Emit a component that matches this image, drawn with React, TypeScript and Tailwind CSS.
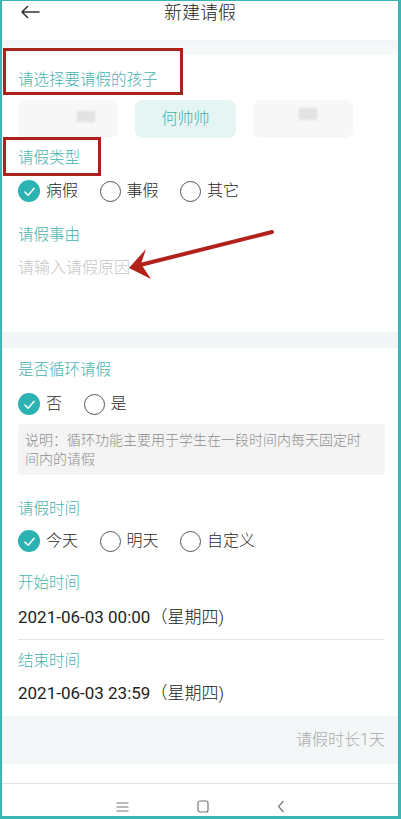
import React from "react";

const Check = ({ on }: { on: boolean }) =>
  on ? (
    <span className="flex h-[22px] w-[22px] items-center justify-center rounded-full bg-[#2bb2b2]">
      <svg width="13" height="13" viewBox="0 0 14 14" fill="none">
        <path d="M2 7.5 L5.6 11 L12 3.5" stroke="#fff" strokeWidth="1.6" strokeLinecap="round" strokeLinejoin="round" />
      </svg>
    </span>
  ) : (
    <span className="h-[21px] w-[21px] rounded-full border border-[#555]" />
  );

const Radio = ({ items, checked }: { items: string[]; checked: number }) => (
  <div className="flex items-center gap-[21.5px]">
    {items.map((t, i) => (
      <div key={t} className="flex items-center gap-[6px]">
        <Check on={i === checked} />
        <span className="text-[16px] leading-[20px] text-[#2a2a2a]">{t}</span>
      </div>
    ))}
  </div>
);

const Label = ({ children }: { children: React.ReactNode }) => (
  <span className="text-[15.5px] leading-[20px] text-[#45b3b0]">{children}</span>
);

const DateText = ({ time }: { time: string }) => (
  <span className="text-[17px] text-[#222]">
    <span className="font-normal">{time}</span>
    <span className="font-light">（星期四)</span>
  </span>
);

export default function App() {
  return (
    <div className="relative box-border flex h-[819px] w-[401px] flex-col overflow-hidden border-t border-l-2 border-r-[3px] border-b-[3px] border-[#3cb5b5] bg-white font-['Roboto','Noto_Sans_CJK_SC',sans-serif] font-light">
      {/* header */}
      <div className="relative flex h-[39px] shrink-0 items-start justify-center pt-[1px]">
        <svg className="absolute left-[18px] top-[4px]" width="20" height="14" viewBox="0 0 20 14" fill="none">
          <path d="M19 7 H2 M7.5 1.5 L2 7 L7.5 12.5" stroke="#333" strokeWidth="1.5" strokeLinecap="round" strokeLinejoin="round" />
        </svg>
        <span className="text-[18px] leading-[22px] text-[#222]">新建请假</span>
      </div>
      <div className="h-[15px] shrink-0 bg-gradient-to-b from-[#f1f5f5] to-[#f8fafa]" />

      {/* section 1 */}
      <div className="flex flex-col pl-4 pr-[13px]">
        <div className="flex h-[45px] items-center pt-[5px]">
          <Label>请选择要请假的孩子</Label>
        </div>
        <div className="flex h-[38px] gap-[17px]">
          <div className="relative h-[38px] w-[100px] rounded-lg bg-[#f7f7f7]">
            <span className="absolute left-[59px] top-[11px] h-[11px] w-[18px] bg-[#e2e2e2] blur-[1px]" />
          </div>
          <div className="flex h-[38px] w-[101px] items-center justify-center rounded-lg bg-[#e4f5f3]">
            <span className="text-[16px] text-[#3fb0ad]">何帅帅</span>
          </div>
          <div className="relative h-[38px] w-[100px] rounded-lg bg-[#f7f7f7]">
            <span className="absolute left-[46px] top-[8px] h-[12px] w-[18px] bg-[#e2e2e2] blur-[1px]" />
          </div>
        </div>
        <div className="flex h-[40px] items-center">
          <Label>请假类型</Label>
        </div>
        <div className="flex h-[26px] items-center">
          <Radio items={["病假", "事假", "其它"]} checked={0} />
        </div>
        <div className="flex h-[46px] items-center pt-[16px]">
          <Label>请假事由</Label>
        </div>
        <div className="flex h-[36px] items-center">
          <span className="text-[16px] text-[#c6c6c6]">请输入请假原因</span>
        </div>
        <div className="h-[46px]" />
      </div>

      <div className="h-[16px] shrink-0 bg-[#f3f6f6]" />

      {/* section 2 */}
      <div className="flex flex-col pl-4 pr-[13px]">
        <div className="flex h-[44px] items-center">
          <Label>是否循环请假</Label>
        </div>
        <div className="flex h-[24px] items-center">
          <Radio items={["否", "是"]} checked={0} />
        </div>
        <div className="h-[8px]" />
        <div className="flex h-[51px] flex-col justify-center rounded bg-[#f4f4f4] px-[7px] text-[14px] leading-[19px] text-[#8e8e8e]">
          <span>说明：循环功能主要用于学生在一段时间内每天固定时</span>
          <span>间内的请假</span>
        </div>
        <div className="flex h-[50px] items-center pt-[18px]">
          <Label>请假时间</Label>
        </div>
        <div className="flex h-[32px] items-center">
          <Radio items={["今天", "明天", "自定义"]} checked={0} />
        </div>
        <div className="flex h-[43px] items-center pt-[9px]">
          <Label>开始时间</Label>
        </div>
        <div className="flex h-[36px] items-center">
          <DateText time="2021-06-03 00:00" />
        </div>
        <div className="h-[3px]" />
        <div className="h-px bg-[#e6e6e6]" />
        <div className="flex h-[42px] items-center">
          <Label>结束时间</Label>
        </div>
        <div className="flex h-[24px] items-center">
          <DateText time="2021-06-03 23:59" />
        </div>
        <div className="h-[10px]" />
      </div>

      <div className="flex h-[48px] shrink-0 items-center justify-end bg-[#f3f7f7] pr-[13px]">
        <span className="text-[16px] text-[#ababab]">请假时长1天</span>
      </div>
      <div className="h-[19px] shrink-0" />
      <div className="h-px shrink-0 bg-[#e2e2e2]" />
      <div className="relative flex flex-1 items-end justify-center pb-[3px]">
        <div className="flex w-[170px] items-center justify-between pl-[1px]">
          <svg width="13" height="10" viewBox="0 0 13 10" fill="none">
            <path d="M0.5 1 H12.5 M0.5 5 H12.5 M0.5 9 H12.5" stroke="#777" strokeWidth="1" />
          </svg>
          <svg width="12" height="13" viewBox="0 0 12 13" fill="none">
            <rect x="1" y="1" width="10" height="11" rx="2" stroke="#777" strokeWidth="1.2" />
          </svg>
          <svg width="8" height="13" viewBox="0 0 8 13" fill="none">
            <path d="M6.5 1 L1.5 6.5 L6.5 12" stroke="#777" strokeWidth="1.2" />
          </svg>
        </div>
      </div>

      {/* annotation overlays */}
      <div className="pointer-events-none absolute left-[1px] top-[47px] h-[47px] w-[180px] border-[3px] border-[#a8241a]" />
      <div className="pointer-events-none absolute left-[1px] top-[136px] h-[39px] w-[98px] border-[3px] border-[#a8241a]" />
      <svg className="pointer-events-none absolute left-[-2px] top-[-1px]" width="401" height="819" viewBox="0 0 401 819" fill="none">
        <path d="M272 232 L140 265" stroke="#b3221a" strokeWidth="4" strokeLinecap="round" />
        <path d="M129 268 L146 249 L141 264 L151 279 Z" fill="#b3221a" />
      </svg>
    </div>
  );
}
